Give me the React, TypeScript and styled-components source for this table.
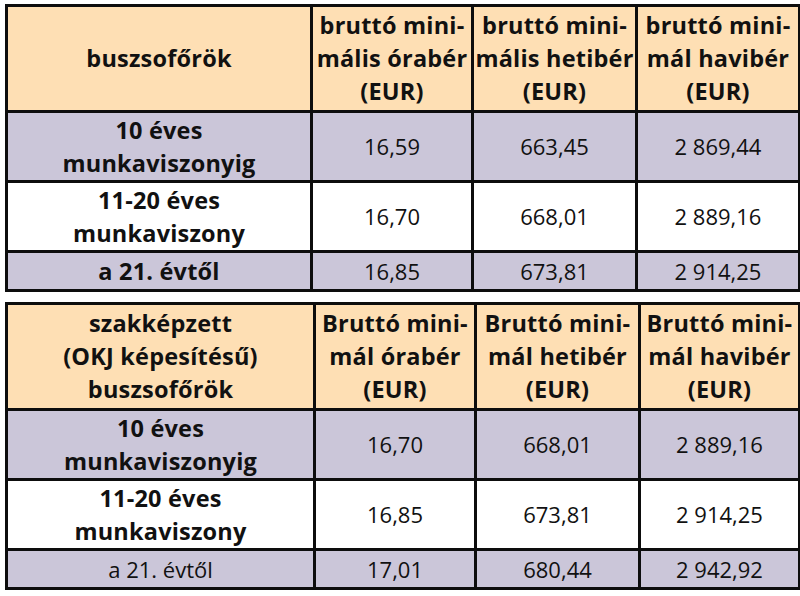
import styled, { createGlobalStyle } from "styled-components";

const GlobalStyle = createGlobalStyle`
  html, body {
    margin: 0;
    padding: 0;
    background: #ffffff;
  }
  body {
    font-family: "Open Sans", "Liberation Sans", sans-serif;
    color: #111111;
  }
`;

type Row = {
  label: string[];
  boldLabel: boolean;
  values: string[];
  shade: "lavender" | "white";
  short?: boolean;
};

type TableData = {
  widths: number[];
  head: string[][];
  rows: Row[];
};

const tables: TableData[] = [
  {
    widths: [305, 161, 164, 163],
    head: [
      ["buszsofőrök"],
      ["bruttó mini-", "mális órabér", "(EUR)"],
      ["bruttó mini-", "mális hetibér", "(EUR)"],
      ["bruttó mini-", "mál havibér", "(EUR)"],
    ],
    rows: [
      {
        label: ["10 éves", "munkaviszonyig"],
        boldLabel: true,
        values: ["16,59", "663,45", "2 869,44"],
        shade: "lavender",
      },
      {
        label: ["11-20 éves", "munkaviszony"],
        boldLabel: true,
        values: ["16,70", "668,01", "2 889,16"],
        shade: "white",
      },
      {
        label: ["a 21. évtől"],
        boldLabel: true,
        values: ["16,85", "673,81", "2 914,25"],
        shade: "lavender",
        short: true,
      },
    ],
  },
  {
    widths: [308, 161, 164, 160],
    head: [
      ["szakképzett", "(OKJ képesítésű)", "buszsofőrök"],
      ["Bruttó mini-", "mál órabér", "(EUR)"],
      ["Bruttó mini-", "mál hetibér", "(EUR)"],
      ["Bruttó mini-", "mál havibér", "(EUR)"],
    ],
    rows: [
      {
        label: ["10 éves", "munkaviszonyig"],
        boldLabel: true,
        values: ["16,70", "668,01", "2 889,16"],
        shade: "lavender",
      },
      {
        label: ["11-20 éves", "munkaviszony"],
        boldLabel: true,
        values: ["16,85", "673,81", "2 914,25"],
        shade: "white",
      },
      {
        label: ["a 21. évtől"],
        boldLabel: false,
        values: ["17,01", "680,44", "2 942,92"],
        shade: "lavender",
        short: true,
      },
    ],
  },
];

const Page = styled.div`
  display: flex;
  flex-direction: column;
  gap: 10px;
  padding: 4px 2px 0 5px;
`;

const Table = styled.table`
  width: 793px;
  border-collapse: collapse;
  table-layout: fixed;
  border: 3px solid #0d0d0d;
`;

const HeadCell = styled.th`
  height: 103px;
  padding: 0;
  background: #fedfb4;
  border: 3px solid #0d0d0d;
  font-size: 23.5px;
  font-weight: 700;
  line-height: 33px;
  letter-spacing: 0.2px;
  text-align: center;
  vertical-align: middle;
  white-space: nowrap;
`;

const Cell = styled.td<{ $shade: "lavender" | "white"; $bold?: boolean; $short?: boolean }>`
  height: ${(p) => (p.$short ? "36px" : "67px")};
  padding: 0;
  background: ${(p) => (p.$shade === "lavender" ? "#cbc6d9" : "#ffffff")};
  border: 3px solid #0d0d0d;
  font-size: ${(p) => (p.$bold ? "23.5px" : "22px")};
  font-weight: ${(p) => (p.$bold ? 700 : 400)};
  line-height: 33px;
  letter-spacing: ${(p) => (p.$bold ? "0.2px" : "0")};
  text-align: center;
  vertical-align: middle;
  white-space: nowrap;
`;

const Lines = ({ lines }: { lines: string[] }) => (
  <>
    {lines.map((l, i) => (
      <span key={i}>
        {l}
        {i < lines.length - 1 && <br />}
      </span>
    ))}
  </>
);

const WageTable = ({ data }: { data: TableData }) => (
  <Table>
    <colgroup>
      {data.widths.map((w, i) => (
        <col key={i} style={{ width: w }} />
      ))}
    </colgroup>
    <thead>
      <tr>
        {data.head.map((h, i) => (
          <HeadCell key={i}>
            <Lines lines={h} />
          </HeadCell>
        ))}
      </tr>
    </thead>
    <tbody>
      {data.rows.map((r, i) => (
        <tr key={i}>
          <Cell $shade={r.shade} $bold={r.boldLabel} $short={r.short}>
            <Lines lines={r.label} />
          </Cell>
          {r.values.map((v, j) => (
            <Cell key={j} $shade={r.shade} $short={r.short}>
              {v}
            </Cell>
          ))}
        </tr>
      ))}
    </tbody>
  </Table>
);

export default function App() {
  return (
    <>
      <GlobalStyle />
      <Page>
        {tables.map((t, i) => (
          <WageTable key={i} data={t} />
        ))}
      </Page>
    </>
  );
}
